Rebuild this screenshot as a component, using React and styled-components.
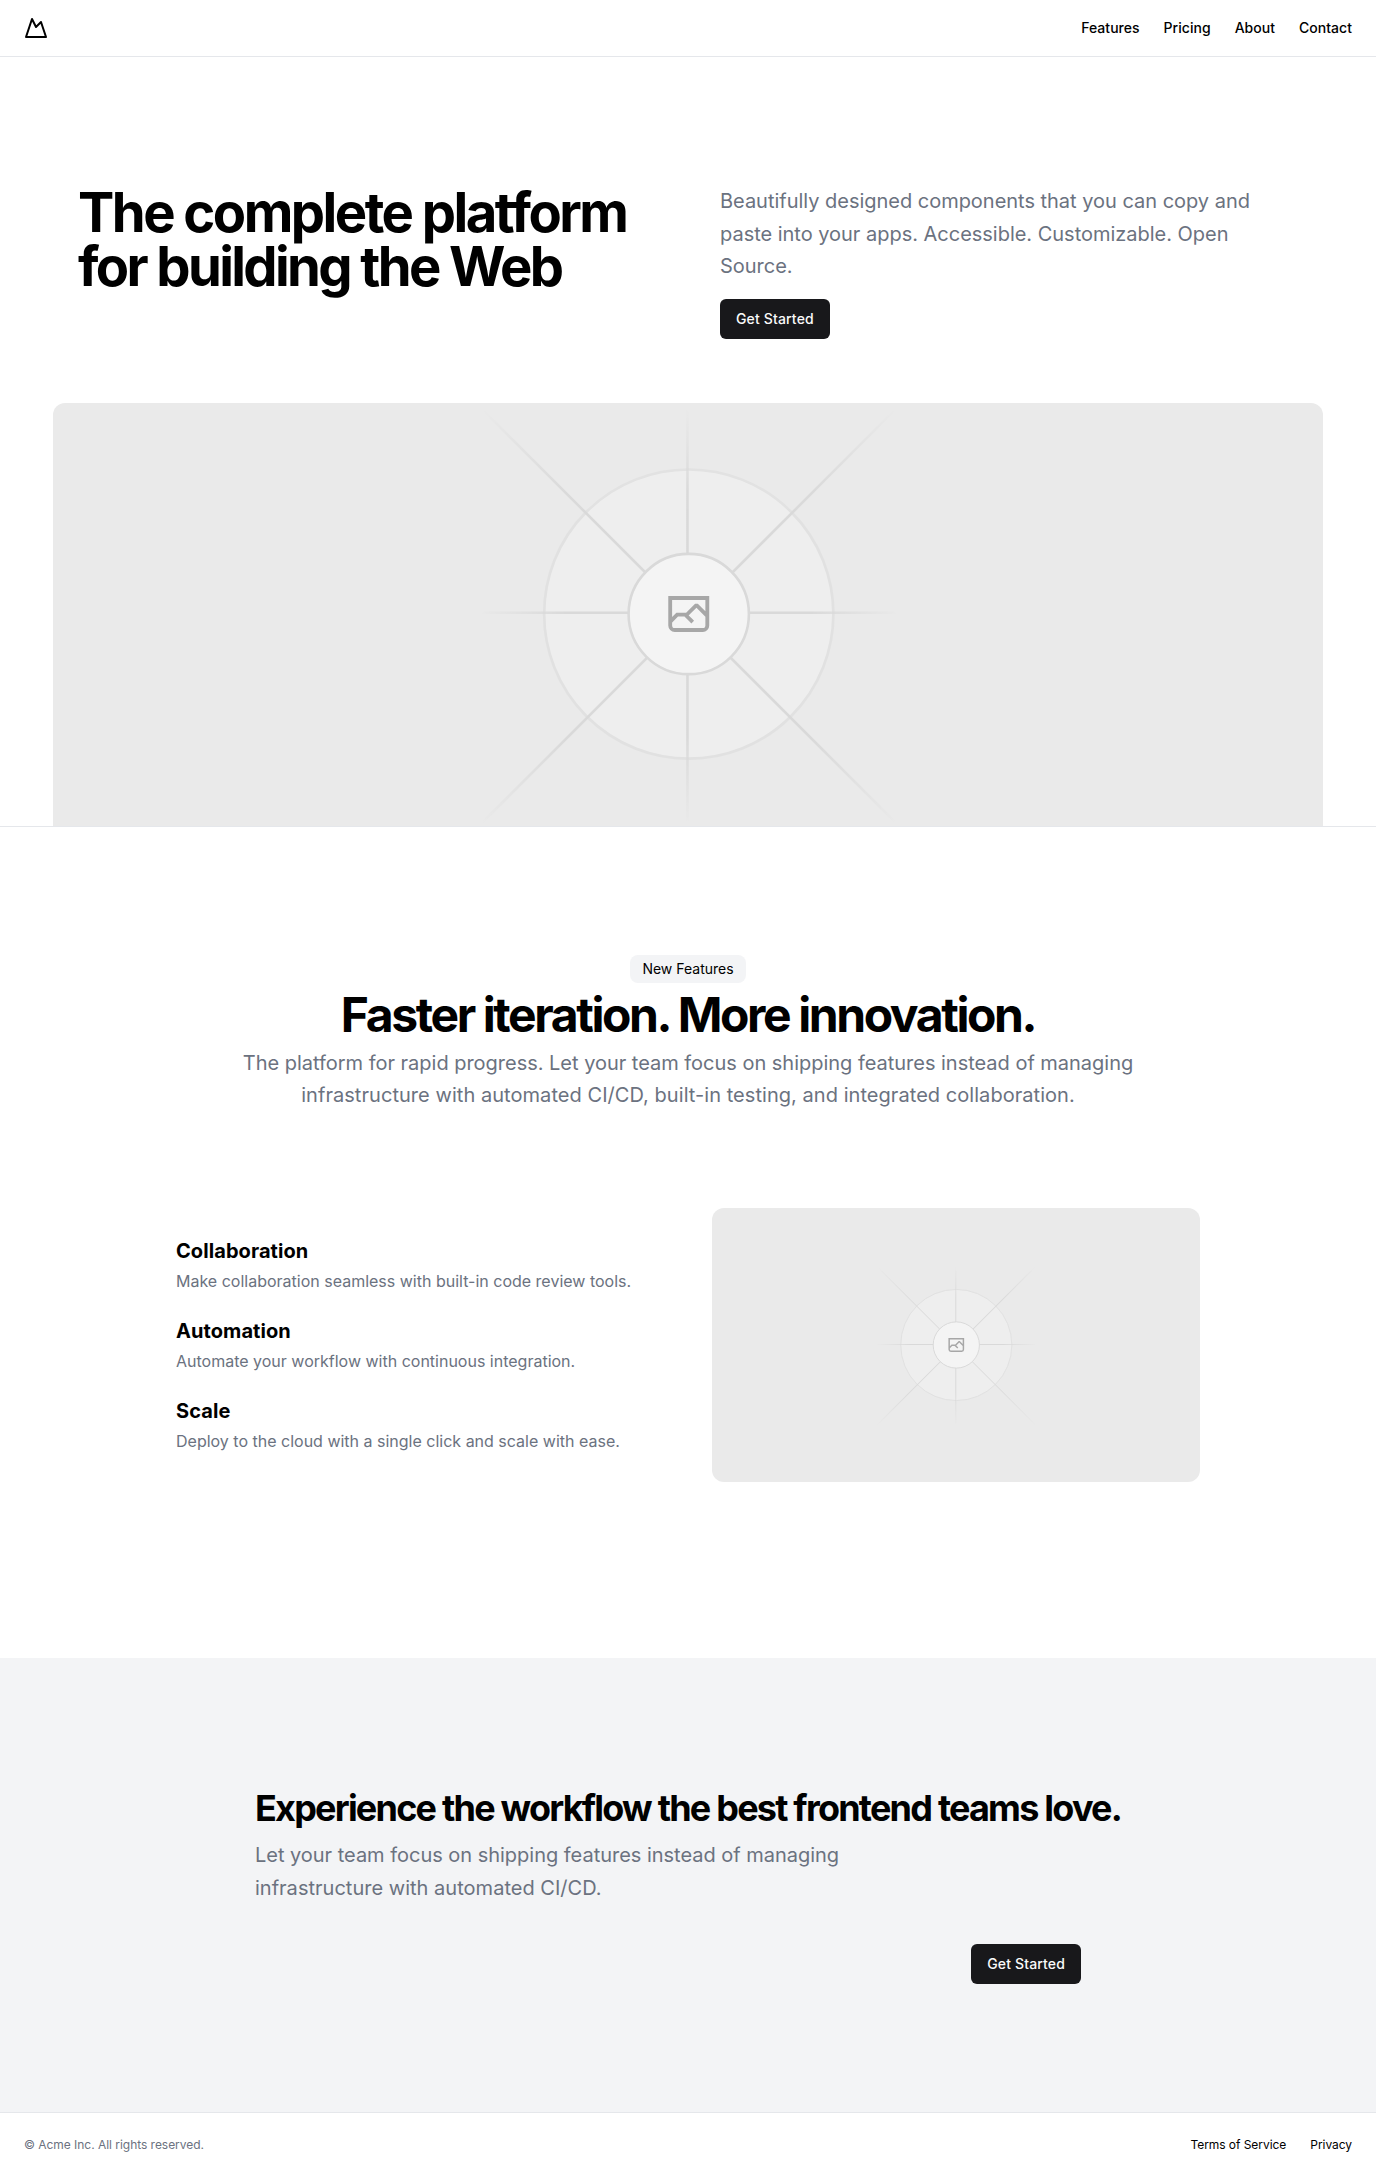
import React, { useId } from "react";
import styled, { createGlobalStyle } from "styled-components";

const GlobalStyle = createGlobalStyle`
  *, *::before, *::after { box-sizing: border-box; }
  body {
    margin: 0;
    background: #fff;
    color: #000;
    font-family: Inter, "Liberation Sans", sans-serif;
    font-size: 16px;
    line-height: 1.5;
  }
  h1, h2, h3, p, ul { margin: 0; padding: 0; }
  ul { list-style: none; }
  a { color: inherit; text-decoration: none; }
`;

const Page = styled.div`
  display: flex;
  flex-direction: column;
`;

const Header = styled.header`
  display: flex;
  align-items: center;
  justify-content: space-between;
  height: 56px;
  padding: 0 24px;
`;

const Logo = styled.a`
  display: flex;
  svg { display: block; }
`;

const Nav = styled.nav`
  display: flex;
  gap: 24px;
  font-size: ${(p) => (p.$small ? 12 : 14)}px;
  line-height: ${(p) => (p.$small ? 16 : 20)}px;
  font-weight: ${(p) => (p.$small ? 400 : 500)};
  letter-spacing: ${(p) => (p.$small ? -0.05 : 0.03)}px;
`;

const Hero = styled.section`
  display: flex;
  flex-direction: column;
  gap: 64px;
  padding: 128px 24px 0;
  border-top: 1px solid #e5e7eb;
  border-bottom: 1px solid #e5e7eb;
`;

const HeroGrid = styled.div`
  display: grid;
  grid-template-columns: 1fr 1fr;
  gap: 64px;
  width: 100%;
  max-width: 1300px;
  margin: 0 auto;
  padding: 0 40px;
`;

const HeroTitle = styled.h1`
  font-size: 54.4px;
  line-height: 54.4px;
  font-weight: 700;
  letter-spacing: -2.64px;

  &::first-line {
    letter-spacing: -2.52px;
  }
`;

const HeroAside = styled.div`
  display: flex;
  flex-direction: column;
  align-items: flex-start;
  gap: 16px;
`;

const Lead = styled.p`
  max-width: ${(p) => p.$max}px;
  color: #6b7280;
  font-size: 20px;
  line-height: 32.5px;
  letter-spacing: ${(p) => p.$tracking || 0}px;

  &::first-line {
    letter-spacing: ${(p) => p.$firstTracking ?? p.$tracking ?? 0}px;
  }
`;

const Button = styled.a`
  display: inline-flex;
  align-items: center;
  justify-content: center;
  height: 40px;
  padding: 0 16px;
  border-radius: 6px;
  background: #18181b;
  color: #fafafa;
  font-size: 14px;
  line-height: 20px;
  font-weight: 500;
  letter-spacing: 0.15px;
`;

const Art = styled.svg`
  display: block;
  width: 100%;
`;

const HeroArt = styled(Art)`
  max-width: 1270px;
  margin: 0 auto;
  aspect-ratio: 3 / 1;
  border-radius: 12px 12px 0 0;
`;

const FeatureArt = styled(Art)`
  aspect-ratio: 16 / 9;
  border-radius: 12px;
`;

const Features = styled.section`
  display: flex;
  flex-direction: column;
  align-items: center;
  gap: 48px;
  padding: 128px 24px;
`;

const Intro = styled.div`
  display: flex;
  flex-direction: column;
  align-items: center;
  gap: 8px;
  text-align: center;
`;

const Badge = styled.div`
  padding: 4px 12px;
  border-radius: 8px;
  background: #f3f4f6;
  font-size: 14px;
  line-height: 20px;
`;

const SectionTitle = styled.h2`
  font-size: 48px;
  line-height: 48px;
  font-weight: 700;
  letter-spacing: -0.05em;
`;

const FeatureGrid = styled.div`
  display: grid;
  grid-template-columns: 1fr 1fr;
  align-items: center;
  gap: 48px;
  width: 100%;
  max-width: 1024px;
  padding: 48px 0;
`;

const FeatureList = styled.ul`
  display: grid;
  gap: 24px;
`;

const FeatureItem = styled.li`
  display: grid;
  gap: 4px;
`;

const FeatureName = styled.h3`
  font-size: 20px;
  line-height: 28px;
  font-weight: 700;
  letter-spacing: 0.08px;
`;

const FeatureText = styled.p`
  color: #6b7280;
  font-size: 16px;
  line-height: 24px;
`;

const CallToAction = styled.section`
  display: grid;
  justify-content: center;
  gap: 40px;
  padding: 128px 24px;
  background: #f3f4f6;
`;

const CtaCopy = styled.div`
  display: flex;
  flex-direction: column;
  gap: 8px;
`;

const CtaTitle = styled.h2`
  font-size: 36px;
  line-height: 45px;
  font-weight: 700;
  letter-spacing: -1.775px;
`;

const CtaActions = styled.div`
  display: flex;
  justify-content: flex-end;
  padding-right: 40px;
`;

const Footer = styled.footer`
  display: flex;
  align-items: center;
  justify-content: space-between;
  padding: 24px;
  border-top: 1px solid #e5e7eb;
`;

const Copyright = styled.p`
  color: #6b7280;
  font-size: 12px;
  line-height: 16px;
  letter-spacing: -0.035px;
`;

function FadeGradient({ id, ...coords }) {
  return (
    <linearGradient id={id} gradientUnits="userSpaceOnUse" {...coords}>
      <stop stopColor="#C9C9C9" stopOpacity="0" />
      <stop offset=".208" stopColor="#C9C9C9" />
      <stop offset=".792" stopColor="#C9C9C9" />
      <stop offset="1" stopColor="#C9C9C9" stopOpacity="0" />
    </linearGradient>
  );
}

function Placeholder({ as: Frame }) {
  const id = useId().replace(/[^a-zA-Z0-9]/g, "");
  return (
    <Frame viewBox="0 0.5 1200 1200" preserveAspectRatio="xMidYMid slice" fill="none" aria-hidden="true">
      <rect width="1200" height="1200" fill="#EAEAEA" />
      <g opacity=".5" strokeWidth="2.418">
        <circle cx="600.709" cy="599.88" r="136.62" fill="#FAFAFA" stroke="#C9C9C9" opacity=".5" />
        <path stroke={`url(#${id}a)`} d="M0-1.209h553.581" transform="scale(1 -1) rotate(45 1163.11 91.165)" />
        <path stroke={`url(#${id}b)`} d="M404.846 598.671h391.726" />
        <path stroke={`url(#${id}c)`} d="M599.5 795.742V404.017" />
        <path stroke={`url(#${id}d)`} d="m795.717 796.597-391.441-391.44" />
        <circle cx="600.709" cy="599.88" r="56.825" fill="#fff" />
        <path
          fill="#666"
          fillRule="evenodd"
          clipRule="evenodd"
          d="M616.426 586.58h-31.434v16.176l3.553-3.554.531-.531h9.068l.074-.074 8.463-8.463h2.565l7.18 7.181V586.58Zm-15.715 14.654 3.698 3.699 1.283 1.282-2.565 2.565-1.282-1.283-5.2-5.199h-6.066l-5.514 5.514-.073.073v2.876a2.418 2.418 0 0 0 2.418 2.418h26.598a2.418 2.418 0 0 0 2.418-2.418v-8.317l-8.463-8.463-7.181 7.181-.071.072Zm-19.347 5.442v4.085a6.045 6.045 0 0 0 6.046 6.045h26.598a6.044 6.044 0 0 0 6.045-6.045v-27.808h-38.689v23.723Z"
        />
        <circle cx="600.709" cy="599.88" r="56.825" stroke="#C9C9C9" />
      </g>
      <defs>
        <FadeGradient id={`${id}a`} x1="554.061" x2="-.48" y1=".083" y2=".087" />
        <FadeGradient id={`${id}b`} x1="796.912" x2="404.507" y1="599.963" y2="599.965" />
        <FadeGradient id={`${id}c`} x1="600.792" x2="600.794" y1="403.677" y2="796.082" />
        <FadeGradient id={`${id}d`} x1="404.85" x2="796.972" y1="403.903" y2="796.02" />
      </defs>
    </Frame>
  );
}

function MountainIcon() {
  return (
    <svg
      width="24"
      height="24"
      viewBox="0 0 24 24"
      fill="none"
      stroke="currentColor"
      strokeWidth="2"
      strokeLinecap="round"
      strokeLinejoin="round"
    >
      <path d="m8 3 4 8 5-5 5 15H2L8 3z" />
    </svg>
  );
}

const features = [
  ["Collaboration", "Make collaboration seamless with built-in code review tools."],
  ["Automation", "Automate your workflow with continuous integration."],
  ["Scale", "Deploy to the cloud with a single click and scale with ease."],
];

export default function App() {
  return (
    <>
      <GlobalStyle />
      <Page>
        <Header>
          <Logo href="#">
            <MountainIcon />
          </Logo>
          <Nav>
            {["Features", "Pricing", "About", "Contact"].map((label) => (
              <a key={label} href="#">{label}</a>
            ))}
          </Nav>
        </Header>
        <Hero>
          <HeroGrid>
            <HeroTitle>The complete platform for building the Web</HeroTitle>
            <HeroAside>
              <Lead $max={700} $tracking={-0.02}>
                Beautifully designed components that you can copy and paste into your apps. Accessible. Customizable.
                Open Source.
              </Lead>
              <Button href="#">Get Started</Button>
            </HeroAside>
          </HeroGrid>
          <Placeholder as={HeroArt} />
        </Hero>
        <Features>
          <Intro>
            <Badge>New Features</Badge>
            <SectionTitle>Faster iteration. More innovation.</SectionTitle>
            <Lead $max={900} $tracking={0.05} $firstTracking={-0.02}>
              The platform for rapid progress. Let your team focus on shipping features instead of managing
              infrastructure with automated CI/CD, built-in testing, and integrated collaboration.
            </Lead>
          </Intro>
          <FeatureGrid>
            <FeatureList>
              {features.map(([name, text]) => (
                <FeatureItem key={name}>
                  <FeatureName>{name}</FeatureName>
                  <FeatureText>{text}</FeatureText>
                </FeatureItem>
              ))}
            </FeatureList>
            <Placeholder as={FeatureArt} />
          </FeatureGrid>
        </Features>
        <CallToAction>
          <CtaCopy>
            <CtaTitle>Experience the workflow the best frontend teams love.</CtaTitle>
            <Lead $max={600} $tracking={0.02} $firstTracking={-0.02}>
              Let your team focus on shipping features instead of managing infrastructure with automated CI/CD.
            </Lead>
          </CtaCopy>
          <CtaActions>
            <Button href="#">Get Started</Button>
          </CtaActions>
        </CallToAction>
        <Footer>
          <Copyright>© Acme Inc. All rights reserved.</Copyright>
          <Nav $small>
            <a href="#">Terms of Service</a>
            <a href="#">Privacy</a>
          </Nav>
        </Footer>
      </Page>
    </>
  );
}
